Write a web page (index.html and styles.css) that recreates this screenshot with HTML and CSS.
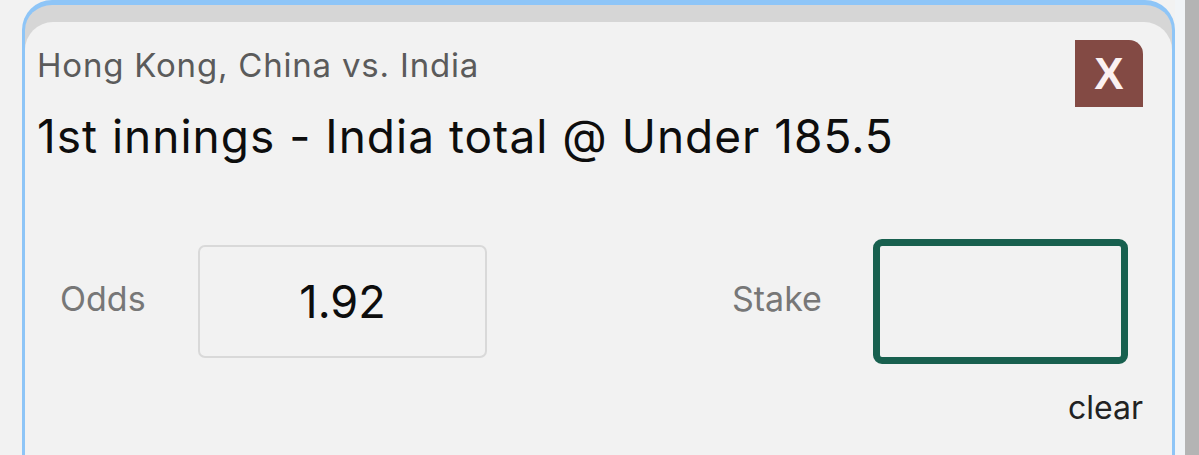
FILE: index.html
```html
<!DOCTYPE html>
<html lang="en">
<head>
<meta charset="utf-8">
<title>Bet slip</title>
<link rel="stylesheet" href="styles.css">
</head>
<body>
<div class="page">
  <div class="panel">
    <div class="card">
      <div class="header">
        <div class="titles">
          <div class="match">Hong Kong, China vs. India</div>
          <div class="market">1st innings - India total @ Under 185.5</div>
        </div>
        <button class="close" type="button">X</button>
      </div>
      <div class="fields">
        <div class="field field-odds">
          <span class="label">Odds</span>
          <div class="odds-box">1.92</div>
        </div>
        <div class="field field-stake">
          <span class="label">Stake</span>
          <input class="stake-input" type="text" aria-label="Stake">
        </div>
      </div>
      <div class="actions">
        <span class="clear">clear</span>
      </div>
    </div>
  </div>
  <div class="gutter"></div>
  <div class="scrollbar"></div>
</div>
</body>
</html>
```
FILE: styles.css
```css
html, body {
  margin: 0;
  padding: 0;
  background: #f2f2f2;
  overflow: hidden;
}
body {
  font-family: Inter, "Noto Sans", sans-serif;
}
.page {
  display: flex;
  height: 455px;
}
.panel {
  margin-left: 22px;
  width: 1153px;
  box-sizing: border-box;
  height: 455px;
  border: 3px solid #8ec5f7;
  border-top-width: 5px;
  border-bottom: none;
  border-radius: 30px 30px 0 0;
  background: #d6d6d6;
  padding-top: 17px;
}
.card {
  background: #f2f2f2;
  border-radius: 28px 28px 0 0;
  height: 100%;
  box-sizing: border-box;
  padding: 18px 29px 0 12px;
}
.header {
  display: flex;
  justify-content: space-between;
  align-items: flex-start;
}
.match {
  font-size: 33px;
  line-height: 40px;
  color: #5b5b5b;
  margin-top: 5px;
  letter-spacing: 0.8px;
}
.market {
  font-size: 46px;
  line-height: 56px;
  color: #0d0d0d;
  margin-top: 23px;
  letter-spacing: 1px;
}
.close {
  width: 68px;
  height: 67px;
  border: none;
  padding: 0;
  background: #834a44;
  color: #fbf1f1;
  border-radius: 0 14px 0 0;
  font-family: "Liberation Sans", Arial, sans-serif;
  font-weight: bold;
  font-size: 44px;
  line-height: 67px;
}
.fields {
  display: flex;
  align-items: center;
  padding-left: 23px;
  margin-top: 75px;
}
.field {
  display: flex;
  align-items: center;
}
.label {
  font-size: 34px;
  color: #777;
  padding-bottom: 7px;
}
.field-odds .label {
  width: 138px;
}
.field-stake {
  margin-left: 245px;
}
.field-stake .label {
  width: 141px;
}
.odds-box {
  width: 289px;
  height: 113px;
  box-sizing: border-box;
  border: 2px solid #d9d9d9;
  border-radius: 7px;
  display: flex;
  align-items: center;
  justify-content: center;
  font-size: 45px;
  color: #0d0d0d;
}
.stake-input {
  width: 255px;
  height: 125px;
  box-sizing: border-box;
  border: 7px solid #18604f;
  border-radius: 9px;
  background: #f2f2f2;
  margin: 0;
  padding: 0;
  outline: none;
}
.actions {
  display: flex;
  justify-content: flex-end;
  margin-top: 24px;
}
.clear {
  font-size: 32px;
  color: #222;
}
.gutter {
  width: 10px;
  background: #f1f4f7;
}
.scrollbar {
  flex: 1;
  background: #b4b4b4;
}
```
